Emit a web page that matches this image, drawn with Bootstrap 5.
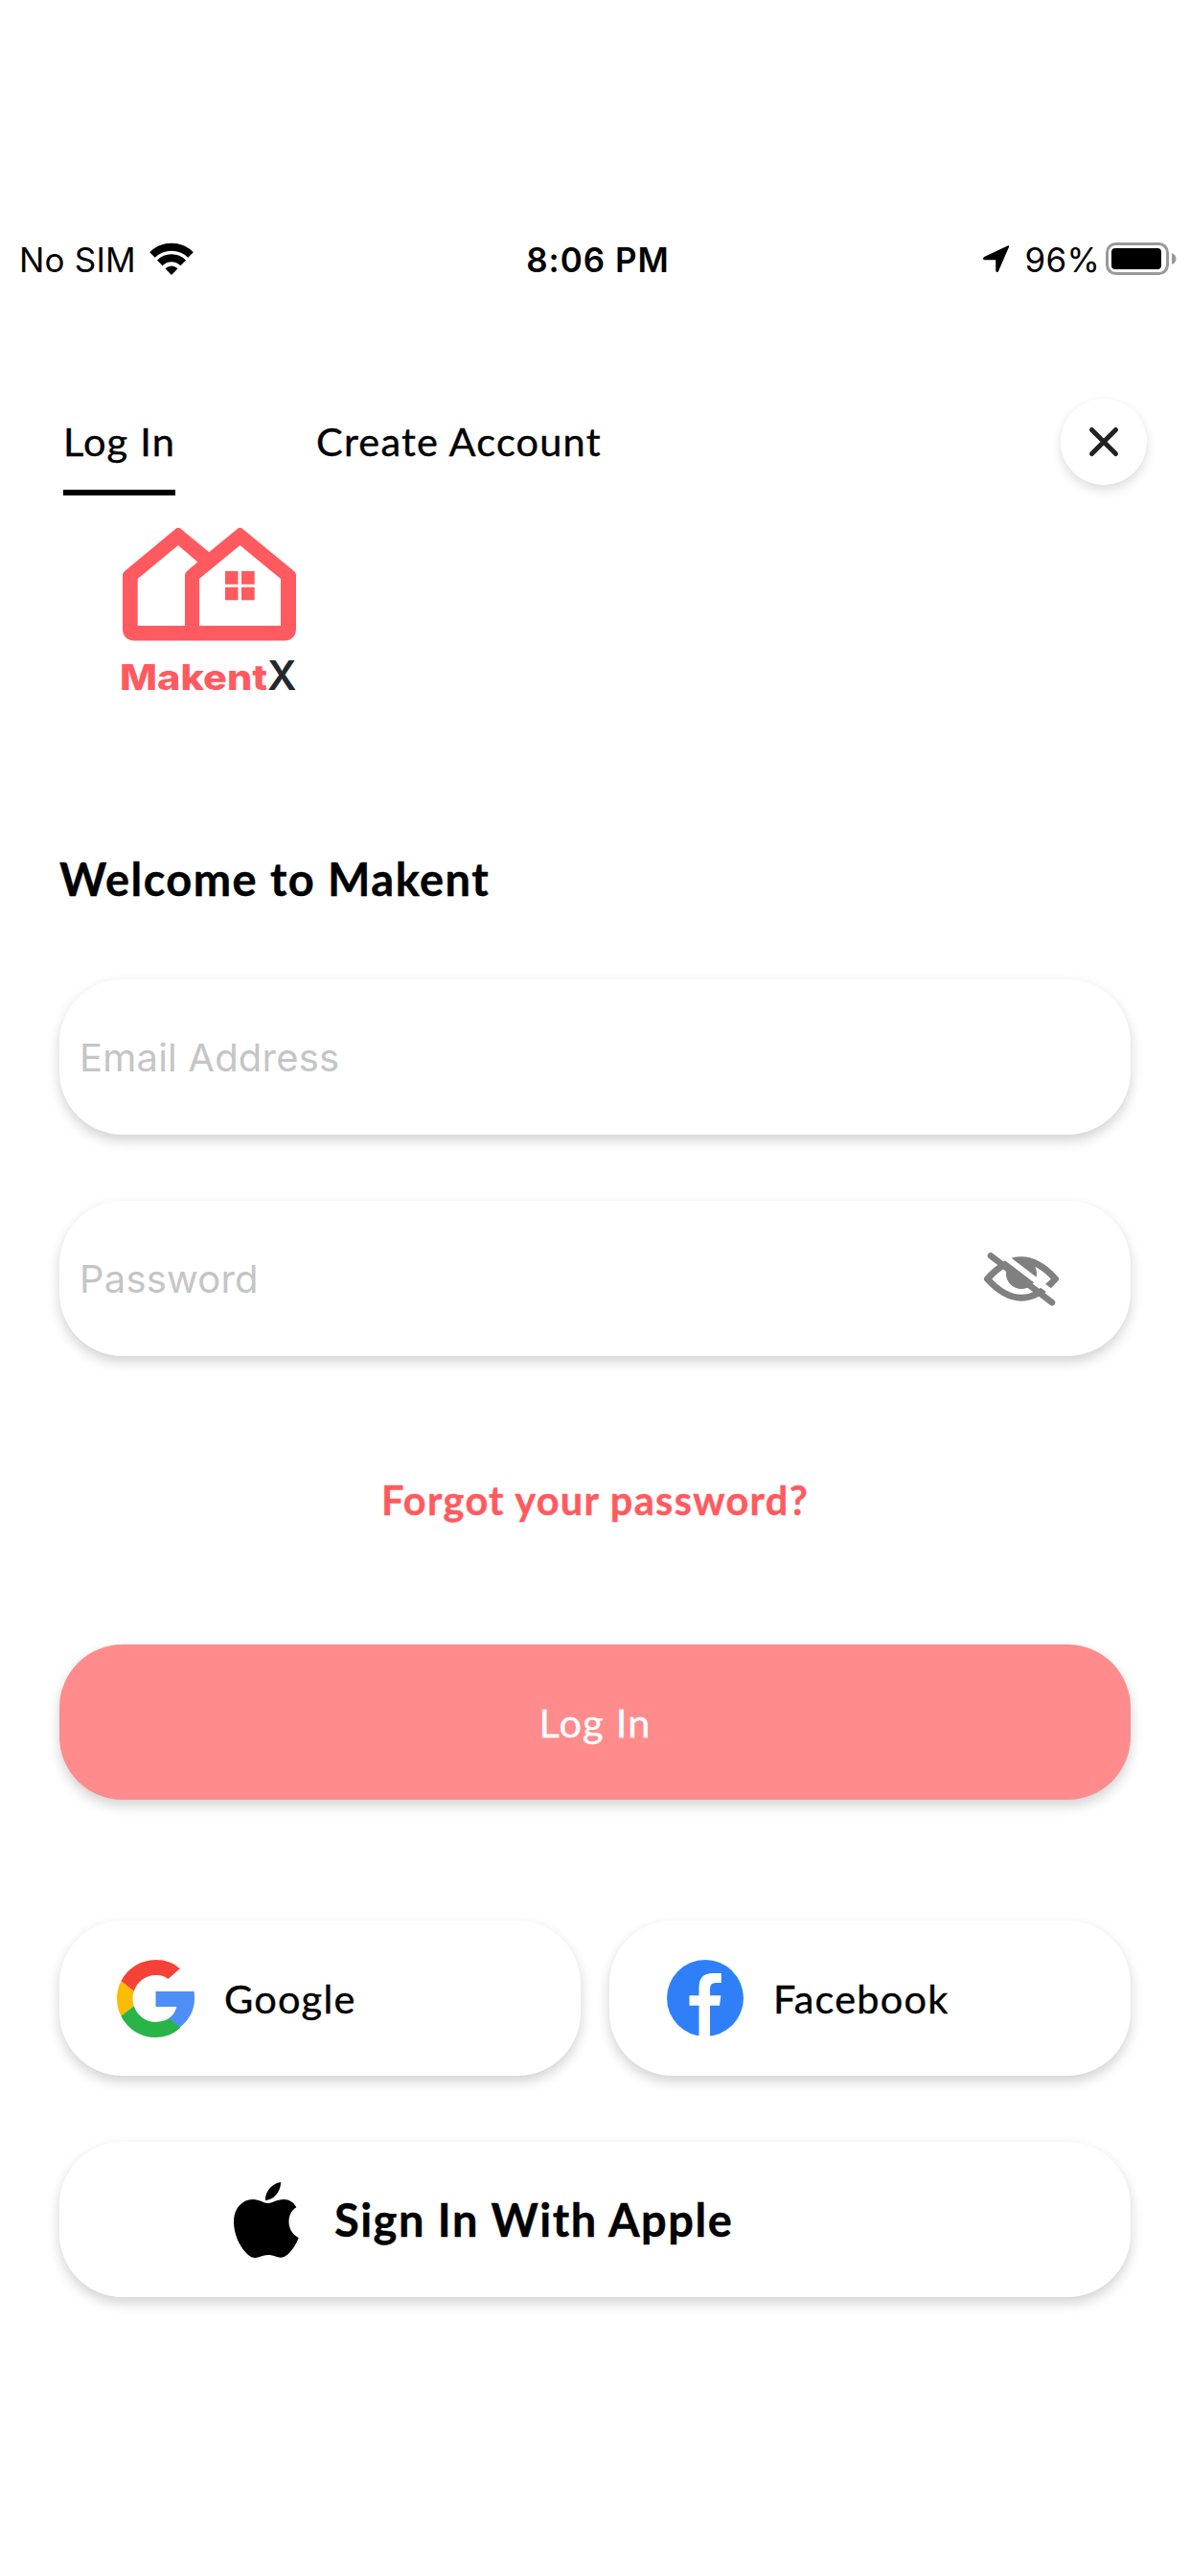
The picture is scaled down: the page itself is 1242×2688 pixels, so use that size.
<!DOCTYPE html>
<html lang="en">
<head>
    <meta charset="UTF-8">
    <meta name="viewport" content="width=device-width, initial-scale=1.0">
    <title>Makent - Log In</title>
    <link href="https://cdn.jsdelivr.net/npm/bootstrap@5.3.0/dist/css/bootstrap.min.css" rel="stylesheet">
    <style>
        body {
            font-family: Lato, "Open Sans", sans-serif;
            font-size: 41.5px;
            letter-spacing: 1.2px;
            color: #000;
            background: #fff;
            -webkit-text-stroke: .4px;
        }
        .screen { width: 1242px; height: 2688px; padding-top: 251px; }

        /* Status bar */
        .status-bar {
            height: 41px;
            padding: 0 14px 0 20px;
            font-family: Inter, sans-serif;
            font-size: 35px;
            line-height: 41px;
            letter-spacing: .2px;
            -webkit-text-stroke: 0;
        }
        .status-bar svg { margin-bottom: 3px; }
        .status-side { width: 400px; }
        .status-time { letter-spacing: 1px; }
        .wifi-icon { margin-left: 14px; }
        .battery-icon { margin-left: 6px; }

        /* Tabs */
        .top-bar { height: 107px; margin-top: 118px; padding: 0 45px 0 66px; }
        .tabs-gap { gap: 147px; }
        .tab-link {
            line-height: 101px;
            color: #000;
            border-bottom: 6px solid transparent;
            text-decoration: none;
        }
        .tab-link.active { border-color: #000; }
        .close-btn { width: 90px; height: 90px; margin-top: 6px; box-shadow: 0 5px 12px rgba(0, 0, 0, .14); }

        .logo { margin: 31px 0 0 116px; letter-spacing: 0; font-family: Inter, sans-serif; }

        .content { padding: 0 62px; }
        .welcome { margin: 140px 0 75px; font-size: 47px; line-height: 60px; font-weight: 700; letter-spacing: 1.45px; }

        .pill {
            height: 162px;
            border: 0;
            border-radius: 66px;
            background: #fff;
            color: #000;
            font-size: 41.5px;
            letter-spacing: 1.2px;
            box-shadow: 0 6px 13px rgba(0, 0, 0, .18);
        }
        .field { font-family: Inter, sans-serif; font-size: 40px; letter-spacing: .2px; padding: 0 21px; -webkit-text-stroke: 0; }
        .field::placeholder { color: #c5c5c5; opacity: 1; }
        .field-gap { margin-top: 69px; }
        .eye-icon { top: 54px; right: 74px; }
        .forgot { margin: 120px 0 121px; line-height: 60px; }
        .forgot a { font-weight: 700; letter-spacing: 1.3px; color: #ff5a5f; text-decoration: none; }
        .pill-login { background: #ff8b8d; color: #fff; }

        .social { margin-top: 126px; gap: 30px; }
        .pill-social { gap: 31px; padding: 0 60px; }
        .pill-apple { gap: 37px; margin-top: 69px; padding: 0 182px; font-size: 47px; letter-spacing: 1.5px; }
    </style>
</head>
<body>
    <div class="screen">
        <!-- Status bar -->
        <div class="status-bar d-flex justify-content-between align-items-center">
            <div class="status-side d-flex align-items-center">
                <span>No SIM</span>
                <svg class="wifi-icon" width="46" height="34" viewBox="0 0 46 34">
                    <g fill="none" stroke="#000" stroke-width="8">
                        <path d="M3 13a28.500 28.500 0 0 1 40 0"/>
                        <path d="M10.800 21.300a17.500 17.500 0 0 1 24.400 0"/>
                    </g>
                    <path d="M16.500 27.200a9.200 9.200 0 0 1 13 0L23 34z"/>
                </svg>
            </div>
            <div class="status-time fw-semibold">8:06 PM</div>
            <div class="status-side d-flex justify-content-end align-items-center">
                <svg class="me-3" width="28" height="28" viewBox="0 0 28 28">
                    <path d="M26.500 1 15.500 26.500q-1 2-1.500-.5V14.500H1.800q-2-.5-.3-1.700z" stroke="#000" stroke-width="1.500" stroke-linejoin="round"/>
                </svg>
                <span>96%</span>
                <svg class="battery-icon" width="74" height="34" viewBox="0 0 74 34">
                    <rect x="1.500" y="1.500" width="63" height="31" rx="9" fill="none" stroke="#999" stroke-width="3"/>
                    <rect x="6" y="6" width="52" height="22" rx="4"/>
                    <path d="M69 11q4.500 2 4.500 6T69 23z" fill="#999"/>
                </svg>
            </div>
        </div>

        <!-- Tabs and close button -->
        <div class="top-bar d-flex justify-content-between">
            <nav class="tabs-gap d-flex align-items-start">
                <a href="#" class="tab-link active">Log In</a>
                <a href="#" class="tab-link">Create Account</a>
            </nav>
            <button type="button" class="close-btn btn bg-white rounded-circle border-0 p-0 d-flex align-items-center justify-content-center" aria-label="Close">
                <svg width="36" height="36" viewBox="0 0 36 36" stroke="#222" stroke-width="5" stroke-linecap="round">
                    <path d="M5.500 5.500 30.500 30.500M30.500 5.500 5.500 30.500"/>
                </svg>
            </button>
        </div>

        <!-- Logo -->
        <svg class="logo d-block" width="206" height="199" viewBox="116 548 206 199">
            <path d="M133 600 186 556 218.200 582.700 250.500 556 304 600V656q0 7.500-7 7.500H140q-7 0-7-7.500z" fill="#ff5a5f" stroke="#ff5a5f" stroke-width="10" stroke-linejoin="round"/>
            <path d="M186 569 206.300 586.500 195 596q-2 2-2 4V653H143.700V604z" fill="#fff"/>
            <path d="M250.500 569 293 604V653H208V604z" fill="#fff"/>
            <path d="M235 596h13.500v13.700H235zM252 596h13.700v13.700H252zM235 612.700h13.500v13.600H235zM252 612.700h13.700v13.600H252z" fill="#ff5a5f"/>
            <text x="125" y="720" font-size="37" font-weight="800" textLength="154" lengthAdjust="spacingAndGlyphs" fill="#ff5a5f">Makent</text>
            <text x="279" y="720" font-size="43" font-weight="600" textLength="30.500" lengthAdjust="spacingAndGlyphs" fill="#22282b">X</text>
        </svg>

        <div class="content">
            <h1 class="welcome">Welcome to Makent</h1>

            <form>
                <input type="email" class="pill field form-control" placeholder="Email Address">
                <div class="field-gap position-relative">
                    <input type="password" class="pill field form-control" placeholder="Password">
                    <svg class="eye-icon position-absolute" width="80" height="58" viewBox="0 0 80 58">
                        <path d="M4.500 27.500Q40 -12 75.500 27.500 40 67 4.500 27.500z" fill="none" stroke="#808080" stroke-width="7" stroke-linejoin="round"/>
                        <circle cx="40" cy="22" r="16" fill="#808080"/>
                        <path d="M14.500 -2 82 49.600" stroke="#fff" stroke-width="6"/>
                        <path d="M8 3.300 72 52.200" stroke="#808080" stroke-width="6.500" stroke-linecap="round"/>
                    </svg>
                </div>

                <div class="forgot text-center"><a href="#">Forgot your password?</a></div>

                <button type="button" class="pill pill-login btn d-block w-100 p-0">Log In</button>
            </form>

            <!-- Social logins -->
            <div class="social d-flex">
                <button type="button" class="pill pill-social btn w-50 d-flex align-items-center">
                    <svg width="81" height="81" viewBox="0 0 48 48">
                        <path fill="#f44336" d="M24 9.500c3.540 0 5.200.6 7.700 2.300l7.300-6.300C35 2 30.470 0 24 0 14.620 0 6.510 5.380 2.560 13.220l7.980 6.190C12.430 13.720 17.740 9.500 24 9.500z"/>
                        <path fill="#4f8ef7" d="M47.800 19.600H24v9.400h12.900c-.58 2.960-2.260 5.480-4.780 7.180l6.500 5.800C44.500 37.500 48 31.500 48 24c0-1.570-.05-3-.2-4.400z"/>
                        <path fill="#fbbc05" d="M10.530 28.590c-.48-1.450-.76-2.990-.76-4.590s.27-3.140.76-4.590l-7.980-6.190C.92 16.460 0 20.120 0 24c0 3.880.92 7.540 2.560 10.780l7.970-6.190z"/>
                        <path fill="#28b446" d="M24 48c6.480 0 11.430-2.330 15.290-6.010l-7.130-5.800c-2.150 1.450-4.920 2.300-8.160 2.300-6.260 0-11.570-4.220-13.470-9.910l-7.980 6.190C6.510 42.620 14.620 48 24 48z"/>
                    </svg>
                    <span>Google</span>
                </button>
                <button type="button" class="pill pill-social btn w-50 d-flex align-items-center">
                    <svg width="80" height="80" viewBox="0 0 80 80">
                        <circle cx="40" cy="40" r="40" fill="#2f80f8"/>
                        <path d="M33.500 81V47.700H23.500V37.300H33.500V29Q33.500 14 48 14H56.800V24H51Q45 24 45 30V37.300H56.400L55 47.700H45V81z" fill="#fff"/>
                    </svg>
                    <span>Facebook</span>
                </button>
            </div>

            <button type="button" class="pill pill-apple btn w-100 d-flex align-items-center fw-bold">
                <svg width="68" height="79" viewBox="0 0 204 237">
                    <path d="M147 0C148 28 126 56 99 57 97 30 120 4 147 0z"/>
                    <path d="M107 66C120 66 134 54 158 54 172 54 188 63 196 79 165 97 162 153 203 174 195 198 170 236 148 236 132 236 126 228 108 228 88 228 82 237 66 237 40 237 0 180 0 125 0 78 30 54 60 54 80 54 94 66 107 66z"/>
                </svg>
                <span class="text-nowrap">Sign In With Apple</span>
            </button>
        </div>
    </div>

    <script src="https://cdn.jsdelivr.net/npm/bootstrap@5.3.0/dist/js/bootstrap.bundle.min.js"></script>
</body>
</html>
